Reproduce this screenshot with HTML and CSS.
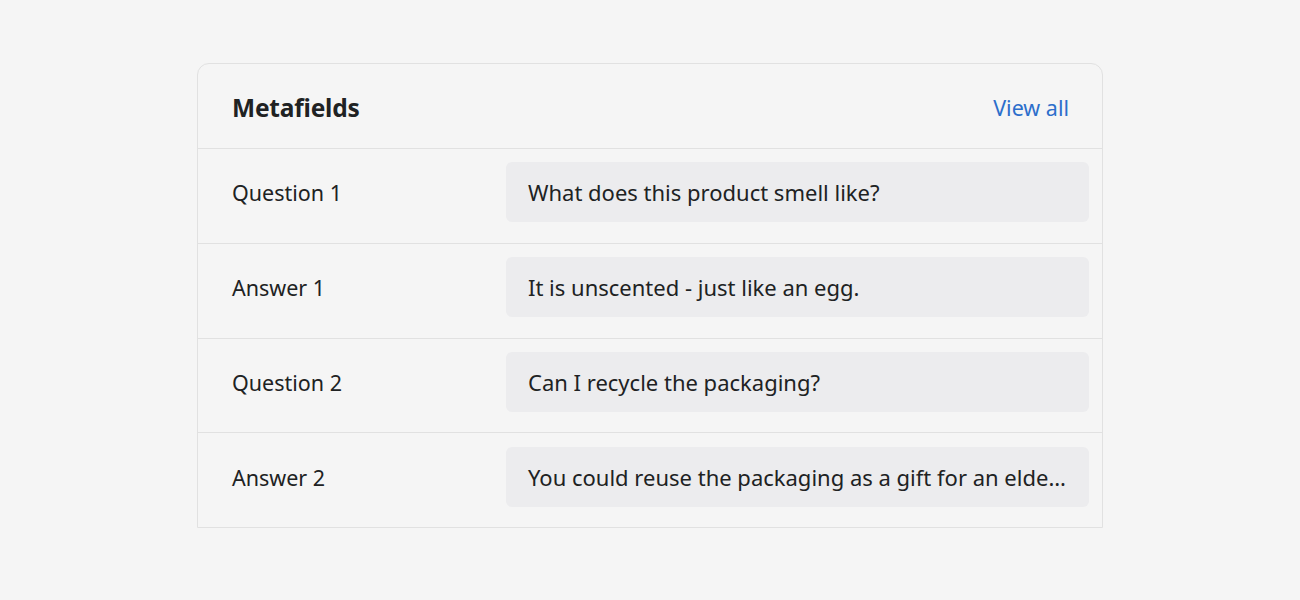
FILE: index.html
```html
<!DOCTYPE html>
<html lang="en">
<head>
<meta charset="utf-8">
<title>Metafields</title>
<link rel="stylesheet" href="styles.css">
</head>
<body>
<div class="card">
  <div class="card-header">
    <h2 class="card-title">Metafields</h2>
    <a class="view-all" href="#">View all</a>
  </div>
  <div class="row">
    <div class="label">Question 1</div>
    <div class="value">What does this product smell like?</div>
  </div>
  <div class="row">
    <div class="label">Answer 1</div>
    <div class="value">It is unscented - just like an egg.</div>
  </div>
  <div class="row row-short">
    <div class="label">Question 2</div>
    <div class="value">Can I recycle the packaging?</div>
  </div>
  <div class="row row-last">
    <div class="label">Answer 2</div>
    <div class="value" title="You could reuse the packaging as a gift for an elderly relative or a friend who loves eggs.">You could reuse the packaging as a gift for an elde…</div>
  </div>
</div>
</body>
</html>
```
FILE: styles.css
```css
html, body {
  margin: 0;
  background: #f5f5f5;
}
body {
  padding-top: 63px;
  font-family: "Noto Sans", "Open Sans", sans-serif;
  color: #202223;
}
.card {
  margin-left: 197px;
  width: 906px;
  box-sizing: border-box;
  border: 1px solid #e1e1e1;
  border-radius: 12px 12px 0 0;
  background: #f5f5f5;
}
.card-header {
  display: flex;
  justify-content: space-between;
  align-items: center;
  padding: 2px 33px 0 34px;
  box-sizing: border-box;
  height: 85px;
  border-bottom: 1px solid #e1e1e1;
}
.card-title {
  margin: 0;
  font-size: 24.5px;
  font-weight: 700;
  letter-spacing: -0.2px;
}
.view-all {
  color: #2c6ecb;
  text-decoration: none;
  font-size: 21.5px;
}
.row {
  display: flex;
  align-items: center;
  padding: 13px 13px 21px 34px;
  border-bottom: 1px solid #e1e1e1;
}
.row-short {
  padding-bottom: 20px;
}
.row-last {
  padding-top: 14px;
  padding-bottom: 20px;
  border-bottom: none;
}
.label {
  width: 274px;
  flex: none;
  font-size: 21.5px;
}
.value {
  flex: 1;
  min-width: 0;
  height: 60px;
  line-height: 60px;
  padding: 0 22px;
  background: #ececee;
  border-radius: 6px;
  font-size: 22px;
  white-space: nowrap;
  overflow: hidden;
  text-overflow: ellipsis;
}
```
